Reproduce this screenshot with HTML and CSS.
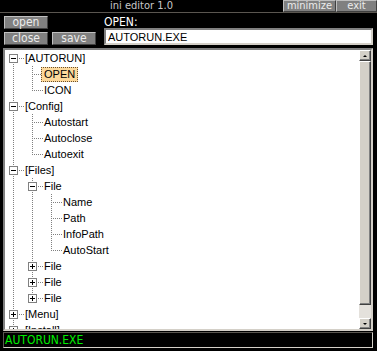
FILE: index.html
```html
<!DOCTYPE html>
<html lang="en">
<head>
  <meta charset="UTF-8" />
  <title>ini editor 1.0</title>
  <link rel="stylesheet" href="styles.css">
</head>
<body>
  <div class="window">
    <div class="titlebar">
      <div class="title">ini editor 1.0</div>
      <button class="tbtn min">minimize</button>
      <button class="tbtn exit">exit</button>
    </div>

    <div class="toolbar">
      <div class="actions">
        <div class="act-row"><button class="btn">open</button></div>
        <div class="act-row"><button class="btn">close</button><button class="btn">save</button></div>
      </div>
      <div class="file">
        <div class="file-label">OPEN:</div>
        <input class="file-input" type="text" value="AUTORUN.EXE">
      </div>
    </div>

    <div class="panel">
      <div class="tree">
        <div class="row"><span class="cell first"><i class="box minus"></i></span><span class="label">[AUTORUN]</span></div>
        <div class="row"><span class="cell pipe"></span><span class="cell tee"></span><span class="label selected">OPEN</span></div>
        <div class="row"><span class="cell pipe"></span><span class="cell elbow"></span><span class="label">ICON</span></div>
        <div class="row"><span class="cell tee"><i class="box minus"></i></span><span class="label">[Config]</span></div>
        <div class="row"><span class="cell pipe"></span><span class="cell tee"></span><span class="label">Autostart</span></div>
        <div class="row"><span class="cell pipe"></span><span class="cell tee"></span><span class="label">Autoclose</span></div>
        <div class="row"><span class="cell pipe"></span><span class="cell elbow"></span><span class="label">Autoexit</span></div>
        <div class="row"><span class="cell tee"><i class="box minus"></i></span><span class="label">[Files]</span></div>
        <div class="row"><span class="cell pipe"></span><span class="cell tee"><i class="box minus"></i></span><span class="label">File</span></div>
        <div class="row"><span class="cell pipe"></span><span class="cell pipe"></span><span class="cell tee"></span><span class="label">Name</span></div>
        <div class="row"><span class="cell pipe"></span><span class="cell pipe"></span><span class="cell tee"></span><span class="label">Path</span></div>
        <div class="row"><span class="cell pipe"></span><span class="cell pipe"></span><span class="cell tee"></span><span class="label">InfoPath</span></div>
        <div class="row"><span class="cell pipe"></span><span class="cell pipe"></span><span class="cell elbow"></span><span class="label">AutoStart</span></div>
        <div class="row"><span class="cell pipe"></span><span class="cell tee"><i class="box plus"></i></span><span class="label">File</span></div>
        <div class="row"><span class="cell pipe"></span><span class="cell tee"><i class="box plus"></i></span><span class="label">File</span></div>
        <div class="row"><span class="cell pipe"></span><span class="cell elbow"><i class="box plus"></i></span><span class="label">File</span></div>
        <div class="row"><span class="cell tee"><i class="box plus"></i></span><span class="label">[Menu]</span></div>
        <div class="row"><span class="cell tee"><i class="box plus"></i></span><span class="label">[Install]</span></div>
      </div>
      <div class="scrollbar">
        <div class="sb-btn up"></div>
        <div class="sb-thumb"></div>
        <div class="sb-track"></div>
        <div class="sb-btn down"></div>
      </div>
    </div>

    <div class="status">AUTORUN.EXE</div>
  </div>
</body>
</html>
```

FILE: styles.css
```css
body {
  margin: 0;
  background: #000;
  font-family: "Liberation Sans", Arial, sans-serif;
  font-size: 11px;
}

.window {
  width: 377px;
  height: 351px;
  background: #000;
  overflow: hidden;
}

/* title bar */
.titlebar {
  display: flex;
  height: 12px;
  border-bottom: 1px solid #5a5650;
}

.title {
  flex: 1;
  text-align: center;
  color: #c8c8c8;
  font-family: "DejaVu Sans Condensed", "Liberation Sans", sans-serif;
  font-size: 11px;
  line-height: 12px;
}

.tbtn,
.btn {
  margin: 0;
  padding: 0;
  background: #808080;
  color: #ececec;
  font-family: "DejaVu Sans Condensed", "Liberation Sans", sans-serif;
  font-size: 12px;
  border: 1px solid;
  border-color: #c0c0c0 #404040 #404040 #c0c0c0;
  box-sizing: border-box;
  cursor: pointer;
}

.tbtn {
  height: 12px;
  font-size: 11px;
  line-height: 10px;
}

.tbtn.min {
  width: 53px;
}

.tbtn.exit {
  width: 41px;
}

/* open / close / save + file name */
.toolbar {
  display: flex;
  padding: 3px 4px 0 4px;
}

.actions {
  display: flex;
  flex-direction: column;
  gap: 3px;
  width: 96px;
}

.act-row {
  display: flex;
  gap: 4px;
}

.btn {
  width: 44px;
  height: 13px;
  line-height: 11px;
}

.file {
  flex: 1;
  margin-left: 4px;
}

.file-label {
  height: 12px;
  color: #fff;
  font-family: "DejaVu Sans Condensed", "Liberation Sans", sans-serif;
  font-size: 12px;
  line-height: 12px;
}

.file-input {
  display: block;
  width: 100%;
  height: 17px;
  margin: 0;
  padding: 0 2px;
  box-sizing: border-box;
  border: 2px solid;
  border-color: #808080 #d4d0c8 #d4d0c8 #808080;
  background: #fff;
  color: #000;
  font-family: "Liberation Sans", Arial, sans-serif;
  font-size: 11px;
}

/* tree view */
.panel {
  display: flex;
  height: 283px;
  margin: 3px 4px 0 3px;
  background: #fff;
  border: 2px solid;
  border-color: #808080 #d4d0c8 #d4d0c8 #808080;
  box-sizing: border-box;
}

.tree {
  flex: 1;
  overflow: hidden;
}

.row {
  display: flex;
  height: 16px;
  align-items: center;
}

.cell {
  width: 19px;
  height: 16px;
  flex: none;
  display: flex;
  align-items: center;
  padding-left: 4px;
  box-sizing: border-box;
  background-repeat: no-repeat;
}

.cell.pipe {
  background-image: repeating-linear-gradient(to bottom, #808080 0 1px, transparent 1px 2px);
  background-size: 1px 16px;
  background-position: 8px 0;
}

.cell.tee {
  background-image:
    repeating-linear-gradient(to bottom, #808080 0 1px, transparent 1px 2px),
    repeating-linear-gradient(to right, #808080 0 1px, transparent 1px 2px);
  background-size: 1px 16px, 9px 1px;
  background-position: 8px 0, 10px 8px;
}

.cell.elbow {
  background-image:
    repeating-linear-gradient(to bottom, #808080 0 1px, transparent 1px 2px),
    repeating-linear-gradient(to right, #808080 0 1px, transparent 1px 2px);
  background-size: 1px 9px, 9px 1px;
  background-position: 8px 0, 10px 8px;
}

.cell.first {
  background-image:
    repeating-linear-gradient(to bottom, #808080 0 1px, transparent 1px 2px),
    repeating-linear-gradient(to right, #808080 0 1px, transparent 1px 2px);
  background-size: 1px 8px, 9px 1px;
  background-position: 8px 8px, 10px 8px;
}

.box {
  position: relative;
  width: 9px;
  height: 9px;
  box-sizing: border-box;
  border: 1px solid #808080;
  background: #fff;
}

.box::before {
  content: "";
  position: absolute;
  left: 1px;
  top: 3px;
  width: 5px;
  height: 1px;
  background: #000;
}

.box.plus::after {
  content: "";
  position: absolute;
  left: 3px;
  top: 1px;
  width: 1px;
  height: 5px;
  background: #000;
}

.label {
  padding: 0 2px;
  margin-left: -2px;
  height: 15px;
  line-height: 13px;
  color: #000;
  white-space: nowrap;
  border: 1px solid transparent;
  box-sizing: border-box;
}

.label.selected {
  background: #fdd99b;
  border: 1px dotted #6a5030;
}

/* scrollbar */
.scrollbar {
  width: 12px;
  display: flex;
  flex-direction: column;
  background: #e4e1dc;
}

.sb-btn,
.sb-thumb {
  box-sizing: border-box;
  background: #d4d0c8;
  border: 1px solid;
  border-color: #fff #404040 #404040 #fff;
  box-shadow: inset -1px -1px 0 #808080;
}

.sb-btn {
  height: 11px;
  display: flex;
  align-items: center;
  justify-content: center;
}

.sb-btn::before {
  content: "";
  width: 0;
  height: 0;
  border-left: 2px solid transparent;
  border-right: 2px solid transparent;
}

.sb-btn.up::before {
  border-bottom: 2px solid #000;
}

.sb-btn.down::before {
  border-top: 2px solid #000;
}

.sb-thumb {
  height: 244px;
}

.sb-track {
  flex: 1;
}

/* status line */
.status {
  height: 16px;
  margin: 1px 4px 0 3px;
  padding-left: 1px;
  box-sizing: border-box;
  border: 1px solid;
  border-color: #5a5650 #d4d0c8 #d4d0c8 #5a5650;
  color: #00ee00;
  font-family: "DejaVu Sans Condensed", "Liberation Sans", sans-serif;
  font-size: 12px;
  line-height: 14px;
}
```
